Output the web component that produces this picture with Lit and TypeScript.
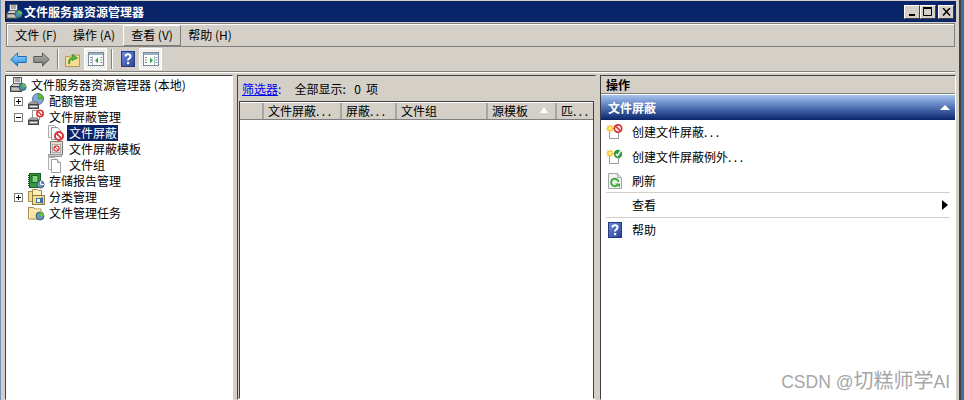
import { LitElement, html, svg, css, nothing } from "lit";
import { customElement } from "lit/decorators.js";

const server = html`<svg width="17" height="16" viewBox="0 0 17 16">
<rect x="3.500" y=".5" width="8" height="6" fill="#e8e8e8" stroke="#555"/><path d="M5 2h5M5 4h5" stroke="#666"/>
<path d="M.5 9.500l3-3h8v3z" fill="#cfcfcf" stroke="#666"/><rect x=".5" y="9.500" width="11" height="5" fill="#9a9a9a" stroke="#444"/><path d="M2 12h8" stroke="#eee"/>
<circle cx="12.500" cy="10" r="3.600" fill="#4d8ea0" stroke="#2c6270"/><path d="M12.500 6.500v3.500h3.600a3.600 3.600 0 0 0-3.600-3.500z" fill="#63c34a"/></svg>`;
const quota = html`<svg width="17" height="16" viewBox="0 0 17 16">
<circle cx="10" cy="6" r="5.500" fill="#86a8d8" stroke="#5a7aa8"/><path d="M10 .5V6h5.500A5.500 5.500 0 0 0 10 .5z" fill="#5fb83f" stroke="#3f8f28" stroke-width=".5"/>
<path d="M.5 11l2-2h7v2z" fill="#cfcfcf" stroke="#666"/><rect x=".5" y="11.500" width="10" height="4" fill="#8a8a8a" stroke="#444"/><path d="M2 13.500h7" stroke="#eee"/></svg>`;
const screenMgr = html`<svg width="17" height="16" viewBox="0 0 17 16">
<rect x="4.500" y="1.500" width="7" height="9" fill="#fff" stroke="#999"/>
<path d="M.5 11l2-2h7v2z" fill="#cfcfcf" stroke="#666"/><rect x=".5" y="11.500" width="10" height="4" fill="#8a8a8a" stroke="#444"/><path d="M2 13.500h7" stroke="#eee"/>
<circle cx="12" cy="4.500" r="3.200" fill="#fff" stroke="#d8343a" stroke-width="1.600"/><path d="M10 2.500l4 4" stroke="#d8343a" stroke-width="1.400"/></svg>`;
const screenFile = html`<svg width="17" height="17" viewBox="0 0 17 17">
<path d="M.5.500h6l2 2v10h-8z" fill="#f4f4f4" stroke="#aaa"/><path d="M3.500 2.500h6l3 3v9h-9z" fill="#fff" stroke="#999"/>
<circle cx="11" cy="11" r="4" fill="#fff" stroke="#d8343a" stroke-width="2"/><path d="M8.400 8.400l5.200 5.200" stroke="#d8343a" stroke-width="1.800"/></svg>`;
const screenTpl = html`<svg width="17" height="16" viewBox="0 0 17 16">
<rect x="2.500" y=".5" width="12" height="13" fill="#e4dcc8" stroke="#777"/><rect x="4.500" y="3.500" width="8" height="8" fill="#fff" stroke="#aaa"/>
<path d="M.5 13.500h13v2H.5z" fill="#ccc" stroke="#999"/>
<circle cx="8.500" cy="7.500" r="2.600" fill="#fff" stroke="#d8343a" stroke-width="1.200"/><path d="M6.800 5.800l3.400 3.400" stroke="#d8343a"/></svg>`;
const fileGroup = html`<svg width="17" height="16" viewBox="0 0 17 16">
<path d="M.5.500h6l1 1v11h-7z" fill="#f6f6f6" stroke="#b0b0b0"/><path d="M3.500 2.500h6l3 3v10h-9z" fill="#fff" stroke="#a0a0a0"/><path d="M9.500 2.500v3h3" fill="#eee" stroke="#a0a0a0"/></svg>`;
const report = html`<svg width="17" height="16" viewBox="0 0 17 16">
<rect x="1.500" y=".5" width="11" height="14" fill="#2e9a3a" stroke="#1c5c24"/><rect x="4" y="2.500" width="6" height="7" fill="#7fd67f" stroke="#1c5c24"/><path d="M.5 2v11" stroke="#222" stroke-dasharray="1 1"/>
<circle cx="12.500" cy="11.500" r="3.600" fill="#6c93b8" stroke="#3d6079"/><path d="M12.500 8v3.500H16" fill="none" stroke="#fff"/></svg>`;
const classify = html`<svg width="17" height="16" viewBox="0 0 17 16">
<path d="M.5 2.500h5l1 1h5v9H.5z" fill="#f6dd96" stroke="#a38d4d"/><path d="M4.500 .5h5l1 1h3v5h-9z" fill="#fbeeb8" stroke="#a38d4d"/>
<rect x="4.500" y="6.500" width="12" height="9" fill="#f6dd96" stroke="#8f7a3e"/><rect x="8.500" y="9.500" width="4" height="4" fill="#fff" stroke="#3d6fa8"/><rect x="13" y="8.500" width="2" height="6" fill="#3d6fa8"/></svg>`;
const task = html`<svg width="17" height="16" viewBox="0 0 17 16">
<path d="M.5 2.500h5l1.500 1.500h6v10H.5z" fill="#f8e3a2" stroke="#a38d4d"/><path d="M1.500 13.500V5h11" fill="none" stroke="#fff5d0"/>
<circle cx="12" cy="11" r="4" fill="#6c93b8" stroke="#3d6079"/><path d="M12 7v4h4a4 4 0 0 0-4-4z" fill="#60c040"/></svg>`;
const question = html`<svg width="14" height="16" viewBox="0 0 14 16">
<defs><linearGradient id="q" x1="0" y1="0" x2="1" y2="1"><stop offset="0" stop-color="#6a8ce0"/><stop offset="1" stop-color="#2b3f94"/></linearGradient></defs>
<rect x=".5" y=".5" width="13" height="15" fill="url(#q)" stroke="#263a84"/>
<path d="M4.500 5.500c0-3 5-3 5 0 0 2-2.500 2-2.500 4" fill="none" stroke="#fff" stroke-width="2"/><rect x="6" y="11" width="2.200" height="2.200" fill="#fff"/></svg>`;
const backArrow = html`<svg width="17" height="15" viewBox="0 0 17 15">
<defs><linearGradient id="b" x1="0" y1="0" x2="0" y2="1"><stop offset="0" stop-color="#a8dcff"/><stop offset="1" stop-color="#1a84de"/></linearGradient></defs>
<path d="M.8 7.500L7.500 1v3.500h8.700v6H7.500V14z" fill="url(#b)" stroke="#1e6cb8"/></svg>`;
const fwdArrow = html`<svg width="17" height="15" viewBox="0 0 17 15">
<defs><linearGradient id="f" x1="0" y1="0" x2="0" y2="1"><stop offset="0" stop-color="#b8b8b8"/><stop offset="1" stop-color="#6e6e6e"/></linearGradient></defs>
<path d="M16.200 7.500L9.500 1v3.500H.8v6h8.700V14z" fill="url(#f)" stroke="#5a5a5a"/></svg>`;
const upFolder = html`<svg width="15" height="15" viewBox="0 0 15 15">
<path d="M.5 4.500h5l1-1.500h8v11.500H.5z" fill="#f6dd96" stroke="#b09a58"/>
<path d="M3.500 11.500c0-4 1.500-6 4-6.500V2.500l5 3.500-5 2.500V7c-2 .5-3 2.500-3 5z" fill="#4fb63a" stroke="#2c7c20" stroke-width=".6"/></svg>`;
const pane = (right: boolean) => html`<svg width="16" height="14" viewBox="0 0 16 14">
<rect x=".5" y=".5" width="15" height="13" fill="#fff" stroke="#7b8b9c"/><rect x="1" y="1" width="14" height="2" fill="#9db0c4"/>
<path d="${right ? "M11.500 4v9" : "M4.500 4v9"}" stroke="#aab6c2"/>
<path d="M2 5.500h2M2 8h2M2 10.500h2M12.500 5.500h2M12.500 8h2M12.500 10.500h2" stroke="#7b8b9c"/>
<path d="${right ? "M7 5.500l3 3-3 3z" : "M10 5.500l-3 3 3 3z"}" fill="#35a83c"/></svg>`;
const burst = svg`<path d="M3.500 4.500h9v10h-9z" fill="#fff" stroke="#999"/><path d="M4 0l.8 2.200L7 1.200 6.200 3.500 8.400 4.400 6.200 5.300 7 7.600 4.800 6.600 4 8.800 3.200 6.600 1 7.600 1.800 5.300-.4 4.400 1.800 3.500 1 1.200 3.200 2.200z" fill="#f8b818"/><circle cx="4" cy="4.400" r="1.800" fill="#ffe88a"/>`;
const createDeny = html`<svg width="17" height="16" viewBox="0 0 17 16">${burst}
<circle cx="12" cy="4.500" r="3.700" fill="#fff" stroke="#d8343a" stroke-width="1.800"/><path d="M9.500 2.300l5 4.400" stroke="#d8343a" stroke-width="1.600"/></svg>`;
const createOk = html`<svg width="17" height="16" viewBox="0 0 17 16">${burst}
<circle cx="12" cy="5" r="4.200" fill="#2c9a38"/><path d="M10 5l1.500 1.800L14.500 2" fill="none" stroke="#fff" stroke-width="1.500"/></svg>`;
const refresh = html`<svg width="14" height="16" viewBox="0 0 14 16">
<path d="M.5.500h9l4 4v11H.5z" fill="#f4f4f4" stroke="#a8a8a8"/><path d="M9.500.500v4h4" fill="#ddd" stroke="#a8a8a8"/>
<path d="M10.500 9a3.700 3.700 0 1 0-1 3" fill="none" stroke="#3aaf3a" stroke-width="2"/><path d="M7 10.500h5v4z" fill="#3aaf3a"/></svg>`;

type Node = { label: string; level: number; icon: unknown; exp?: "+" | "-"; sel?: boolean };
const nodes: Node[] = [
  { label: "文件服务器资源管理器 (本地)", level: 0, icon: server },
  { label: "配额管理", level: 1, icon: quota, exp: "+" },
  { label: "文件屏蔽管理", level: 1, icon: screenMgr, exp: "-" },
  { label: "文件屏蔽", level: 2, icon: screenFile, sel: true },
  { label: "文件屏蔽模板", level: 2, icon: screenTpl },
  { label: "文件组", level: 2, icon: fileGroup },
  { label: "存储报告管理", level: 1, icon: report },
  { label: "分类管理", level: 1, icon: classify, exp: "+" },
  { label: "文件管理任务", level: 1, icon: task },
];
const dots = html`<span class="dots">...</span>`;
const cols = [
  { label: "", more: false, w: 24 },
  { label: "文件屏蔽", more: true, w: 78 },
  { label: "屏蔽", more: true, w: 55 },
  { label: "文件组", more: false, w: 91 },
  { label: "源模板", more: false, w: 69, sort: true },
  { label: "匹", more: true, w: 36 },
];

@customElement("app-root")
export class AppRoot extends LitElement {
  static styles = css`
    :host { display: block; width: 964px; height: 400px; overflow: hidden; position: relative; background: #3a6ea5;
      font: 12px/16px "Noto Sans CJK SC", "Liberation Sans", sans-serif; color: #000; }
    .win { width: 961px; height: 400px; box-sizing: border-box; background: #d4d0c8; display: flex; flex-direction: column;
      padding: 0 3px 0 4px; border-left: 1px solid #6f95bd; border-right: 2px solid #404040; }
    .title { height: 21px; margin-top: 1px; background: #0a246a; color: #fff; font-weight: 700; display: flex;
      align-items: center; gap: 1px; padding: 0 2px 0 1px; flex: none; }
    .title svg { flex: none; }
    .title span { flex: 1; }
    .caps { display: flex; }
    .cap { width: 16px; height: 14px; box-sizing: border-box; background: #d4d0c8; border: 1px solid; border-color: #fff #404040 #404040 #fff; display: flex; align-items: center; justify-content: center; }
    .cap + .cap:last-child { margin-left: 2px; }
    .menu { height: 24px; margin: 1px 1px 0; display: flex; align-items: center; flex: none; border: 1px solid #808080; box-shadow: inset 1px 1px 0 #fff; box-sizing: border-box; }
    .mi { width: 58px; height: 21px; box-sizing: border-box; display: flex; align-items: center; justify-content: center; }
    .mi.on { border: 1px solid; border-color: #fff #808080 #808080 #fff; }
    .toolbar { height: 25px; flex: none; display: flex; align-items: center; padding: 0 0 0 1px; margin: 0 1px; border-bottom: 1px solid #808080; box-sizing: border-box; box-shadow: 0 1px 0 #fff; }
    .tb { width: 23px; height: 22px; display: flex; align-items: center; justify-content: center; flex: none; }
    .tb.chk { background: repeating-conic-gradient(#fff 0 25%, #e4e2dc 0 50%) 0 0 / 2px 2px; box-shadow: inset 0 0 0 1px #fff; }
    .sep { width: 1px; height: 20px; background: #808080; border-right: 1px solid #fff; margin: 0 2px 0 4px; flex: none; }
    .sep.wide { margin-right: 3px; }
    .panes { flex: 1; display: grid; grid-template-columns: 228px 359px 356px; column-gap: 4px; padding-top: 3px; min-height: 0; }
    .pane { border: 1px solid; border-color: #404040 #fff #fff #404040; overflow: hidden; min-height: 0; display: flex; flex-direction: column; }
    .tree { background: #fff; padding-top: 1px; }
    .row { height: 16px; display: flex; align-items: center; flex: none; white-space: nowrap; }
    .exp { width: 9px; height: 9px; box-sizing: border-box; border: 1px solid #808080; background: #fff; position: relative; flex: none; margin: 0 5px 0 8px; }
    .exp::before { content: ""; position: absolute; left: 1px; top: 3px; width: 5px; height: 1px; background: #000; }
    .exp.plus::after { content: ""; position: absolute; left: 3px; top: 1px; width: 1px; height: 5px; background: #000; }
    .ph { width: 9px; flex: none; margin: 0 5px 0 8px; }
    .lv0 { padding-left: 4px; }
    .lv2 { padding-left: 20px; }
    .ic { width: 17px; height: 16px; flex: none; display: block; }
    .lbl { padding: 0 1px; margin-left: 3px; }
    .lbl.sel { background: #0a246a; color: #fff; margin-left: 2px; padding: 0 1px 0 2px; }
    .center { background: #d4d0c8; border-right-color: #d4d0c8; }
    .filter { height: 25px; flex: none; display: flex; align-items: center; padding: 0 0 0 4px; gap: 10px; word-spacing: 2.500px; }
    .filter a { color: #0000ff; text-decoration: underline; }
    .colon { display: inline-block; width: 6.500px; }
    .list { flex: 1; margin: 0 1px; background: #fff; border: 1px solid; border-color: #404040 #404040 transparent #404040; display: flex; flex-direction: column; }
    .hdr { height: 18px; display: flex; background: #d4d0c8; border-bottom: 1px solid #808080; box-sizing: border-box; border-top: 1px solid #fff; flex: none; }
    .hc { box-sizing: border-box; padding-left: 4px; border-right: 2px solid #a8a6a0; position: relative; white-space: nowrap; overflow: hidden; }
    .hc:last-child { border-right: 0; }
    .dots { letter-spacing: 2.500px; }
    .sort { position: absolute; right: 7px; top: 4px; width: 0; height: 0; border: 4px solid transparent; border-top: 0; border-bottom: 6px solid #fff; }
    .actions { background: #fff; }
    .ahead { height: 18px; flex: none; background: #d4d0c8; font-weight: 700; padding: 1px 0 0 5px; border-bottom: 1px solid #808080; box-sizing: border-box; line-height: 16px; }
    .ablue { height: 25px; flex: none; margin-top: 1px; background: linear-gradient(#a8c4ec, #7a9cd4 25%, #3a5a9e 65%, #0a246a); color: #fff; font-weight: 700; display: flex; align-items: center; justify-content: space-between; padding: 0 5px 0 7px; box-sizing: border-box; }
    .up { width: 0; height: 0; border: 5px solid transparent; border-top: 0; border-bottom-color: #fff; }
    .alist { padding: 0 5px; display: flex; flex-direction: column; }
    .ai { height: 25px; display: flex; align-items: center; box-sizing: border-box; flex: none; position: relative; }
    .ai.first { height: 24px; }
    .ai.short { height: 23px; }
    .ai .ai-ic { width: 26px; display: flex; align-items: center; flex: none; }
    .ai .ai-ic.in { width: 24px; padding-left: 2px; }
    .ai.ruled { border-top: 1px solid #d4d0c8; }
    .ai .arrow { position: absolute; right: 2px; width: 0; height: 0; border: 5px solid transparent; border-right: 0; border-left: 6px solid #000; }
    .mark { position: absolute; right: 14px; top: 371px; font: 17.500px/20px "Liberation Sans", "Noto Sans CJK SC", sans-serif; color: #a6a6a6; pointer-events: none; white-space: nowrap; }
    .mark b { font-weight: 400; font-size: 20px; }
  `;

  render() {
    return html`<div class="win">
      <div class="title">${server}<span>文件服务器资源管理器</span>
        <div class="caps">
          <div class="cap"><svg width="8" height="8"><rect x="1" y="6" width="6" height="2"/></svg></div>
          <div class="cap"><svg width="10" height="9"><path d="M.5 1.500h8v7h-8z" fill="none" stroke="#000"/><path d="M0 .5h9" stroke="#000"/></svg></div>
          <div class="cap"><svg width="9" height="8"><path d="M1 0l7 7.500M8 0L1 7.500" stroke="#000" stroke-width="1.500"/></svg></div>
        </div>
      </div>
      <div class="menu">
        <div class="mi">文件 (F)</div><div class="mi">操作 (A)</div><div class="mi on">查看 (V)</div><div class="mi">帮助 (H)</div>
      </div>
      <div class="toolbar">
        <div class="tb">${backArrow}</div><div class="tb">${fwdArrow}</div>
        <div class="sep"></div>
        <div class="tb">${upFolder}</div><div class="tb chk">${pane(false)}</div>
        <div class="sep wide"></div>
        <div class="tb">${question}</div><div class="tb chk">${pane(true)}</div>
      </div>
      <div class="panes">
        <div class="pane tree">
          ${nodes.map(n => html`<div class="row lv${n.level}">
            ${n.level === 1 ? (n.exp ? html`<span class="exp ${n.exp === "+" ? "plus" : ""}"></span>` : html`<span class="ph"></span>`) : nothing}
            ${n.level === 2 ? html`<span class="ph"></span>` : nothing}
            <span class="ic">${n.icon}</span>
            <span class="lbl ${n.sel ? "sel" : ""}">${n.label}</span>
          </div>`)}
        </div>
        <div class="pane center">
          <div class="filter"><a>筛选器<span class="colon">:</span></a><span>全部显示<span class="colon">:</span> 0 项</span></div>
          <div class="list">
            <div class="hdr">${cols.map(c => html`<div class="hc" style="width:${c.w}px">${c.label}${c.more ? dots : nothing}${c.sort ? html`<i class="sort"></i>` : nothing}</div>`)}</div>
          </div>
        </div>
        <div class="pane actions">
          <div class="ahead">操作</div>
          <div class="ablue"><span>文件屏蔽</span><i class="up"></i></div>
          <div class="alist">
            <div class="ai first"><span class="ai-ic">${createDeny}</span>创建文件屏蔽${dots}</div>
            <div class="ai"><span class="ai-ic">${createOk}</span>创建文件屏蔽例外${dots}</div>
            <div class="ai short"><span class="ai-ic in">${refresh}</span>刷新</div>
            <div class="ai ruled"><span class="ai-ic"></span>查看<i class="arrow"></i></div>
            <div class="ai ruled"><span class="ai-ic in">${question}</span>帮助</div>
          </div>
        </div>
      </div>
    </div>
    <div class="mark">CSDN @<b>切糕师学</b>AI</div>`;
  }
}
